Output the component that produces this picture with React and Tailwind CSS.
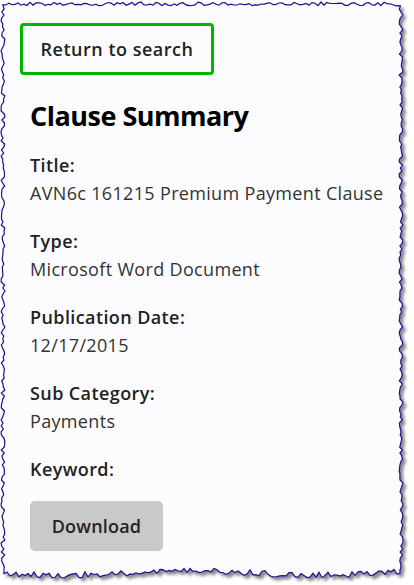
import React from 'react';

// torn paper outline, points jittered with a seeded random
const tornPath = () => {
  let seed = 7;
  const rnd = () => {
    seed = (seed * 16807) % 2147483647;
    return (seed % 1000) / 1000;
  };
  const pts = [];
  for (let x = 3; x <= 401; x += 3) pts.push([x, 4 + (rnd() - 0.5) * 4]);
  for (let y = 6; y <= 572; y += 3) pts.push([401 + (rnd() - 0.5) * 4, y]);
  for (let x = 400; x >= 3; x -= 3) pts.push([x, 573 + (rnd() - 0.5) * 6 + Math.sin(x / 40) * 2]);
  for (let y = 570; y >= 6; y -= 3) pts.push([3 + (rnd() - 0.5) * 4, y]);
  return 'M' + pts.map(([a, b]) => `${a.toFixed(1)} ${b.toFixed(1)}`).join(' L') + ' Z';
};

const Field = ({ label, value }) => (
  <div className="mb-5">
    <div className="text-[18px] leading-[28px] font-semibold text-[#222] tracking-[0.4px]">{label}</div>
    {value && <div className="text-[18px] leading-[28px] font-normal text-[#333] tracking-[0.33px]">{value}</div>}
  </div>
);

export default function App() {
  const d = tornPath();
  return (
    <div
      className="relative w-[414px] h-[585px] bg-white overflow-hidden"
      style={{ fontFamily: '"Open Sans", "Noto Sans", sans-serif' }}
    >
      <svg className="absolute inset-0" width="414" height="585">
        <defs>
          <filter id="sh" x="-5%" y="-5%" width="115%" height="115%">
            <feDropShadow dx="3" dy="3" stdDeviation="1.5" floodColor="#000" floodOpacity="0.45" />
          </filter>
        </defs>
        <path d={d} fill="#fcfcff" stroke="#14148c" strokeWidth="1.2" filter="url(#sh)" />
      </svg>

      <div className="relative px-5 pt-[23px]">
        <button className="w-[194px] h-[52px] border-[3px] border-[#00b400] rounded-[4px] text-[18px] font-semibold tracking-[0.5px] text-[#222] bg-[#fcfcff]">
          Return to search
        </button>

        <div className="px-[10px] pt-[23px]">
          <h2 className="text-[27px] leading-[36px] font-bold text-black tracking-[-0.5px] mb-[17px]">Clause Summary</h2>
          <Field label="Title:" value="AVN6c 161215 Premium Payment Clause" />
          <Field label="Type:" value="Microsoft Word Document" />
          <Field label="Publication Date:" value="12/17/2015" />
          <Field label="Sub Category:" value="Payments" />
          <div className="text-[18px] leading-[28px] font-semibold text-[#222] tracking-[0.4px] mb-[18px]">Keyword:</div>
          <button className="w-[133px] h-[50px] rounded-[5px] bg-[#c9c9c9] text-[18px] font-semibold text-[#222] tracking-[0.2px]">
            Download
          </button>
        </div>
      </div>
    </div>
  );
}
